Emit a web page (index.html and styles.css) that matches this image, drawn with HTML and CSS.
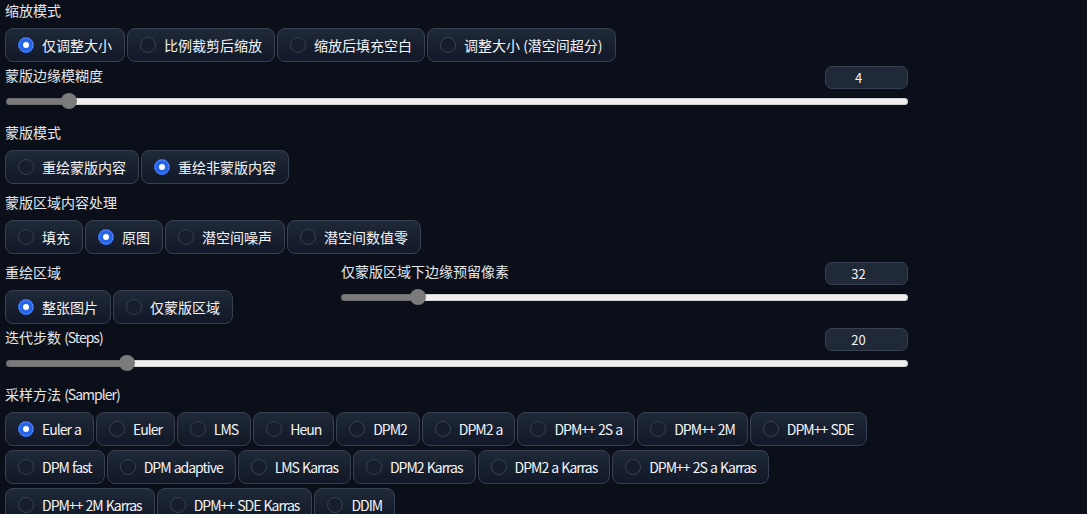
FILE: index.html
```html
<!DOCTYPE html>
<html lang="zh">
<head>
<meta charset="utf-8">
<title>img2img settings</title>
<link rel="stylesheet" href="styles.css">
</head>
<body>
<div class="panel">

  <div class="block radio-block">
    <div class="label">缩放模式</div>
    <div class="options">
      <label class="opt"><span class="radio checked"></span><span>仅调整大小</span></label>
      <label class="opt"><span class="radio"></span><span>比例裁剪后缩放</span></label>
      <label class="opt"><span class="radio"></span><span>缩放后填充空白</span></label>
      <label class="opt"><span class="radio"></span><span>调整大小 (潜空间超分)</span></label>
    </div>
  </div>

  <div class="block slider-block">
    <div class="slider-head">
      <div class="label">蒙版边缘模糊度</div>
      <div class="num">4</div>
    </div>
    <input class="range" type="range" min="0" max="64" value="4" style="--r:0.0625">
  </div>

  <div class="block radio-block">
    <div class="label">蒙版模式</div>
    <div class="options">
      <label class="opt"><span class="radio"></span><span>重绘蒙版内容</span></label>
      <label class="opt"><span class="radio checked"></span><span>重绘非蒙版内容</span></label>
    </div>
  </div>

  <div class="block radio-block">
    <div class="label">蒙版区域内容处理</div>
    <div class="options">
      <label class="opt"><span class="radio"></span><span>填充</span></label>
      <label class="opt"><span class="radio checked"></span><span>原图</span></label>
      <label class="opt"><span class="radio"></span><span>潜空间噪声</span></label>
      <label class="opt"><span class="radio"></span><span>潜空间数值零</span></label>
    </div>
  </div>

  <div class="block two-col">
    <div class="radio-block">
      <div class="label">重绘区域</div>
      <div class="options">
        <label class="opt"><span class="radio checked"></span><span>整张图片</span></label>
        <label class="opt"><span class="radio"></span><span>仅蒙版区域</span></label>
      </div>
    </div>
    <div class="slider-block right-slider">
      <div class="slider-head">
        <div class="label">仅蒙版区域下边缘预留像素</div>
        <div class="num">32</div>
      </div>
      <input class="range" type="range" min="0" max="256" value="32" style="--r:0.125">
    </div>
  </div>

  <div class="block slider-block">
    <div class="slider-head">
      <div class="label">迭代步数 <span class="en">(Steps)</span></div>
      <div class="num">20</div>
    </div>
    <input class="range" type="range" min="1" max="150" value="20" style="--r:0.1275">
  </div>

  <div class="block radio-block">
    <div class="label">采样方法 <span class="en">(Sampler)</span></div>
    <div class="options">
      <label class="opt"><span class="radio checked"></span><span class="en">Euler a</span></label>
      <label class="opt"><span class="radio"></span><span class="en">Euler</span></label>
      <label class="opt"><span class="radio"></span><span class="en">LMS</span></label>
      <label class="opt"><span class="radio"></span><span class="en">Heun</span></label>
      <label class="opt"><span class="radio"></span><span class="en">DPM2</span></label>
      <label class="opt"><span class="radio"></span><span class="en">DPM2 a</span></label>
      <label class="opt"><span class="radio"></span><span class="en">DPM++ 2S a</span></label>
      <label class="opt"><span class="radio"></span><span class="en">DPM++ 2M</span></label>
      <label class="opt"><span class="radio"></span><span class="en">DPM++ SDE</span></label>
      <label class="opt"><span class="radio"></span><span class="en">DPM fast</span></label>
      <label class="opt"><span class="radio"></span><span class="en">DPM adaptive</span></label>
      <label class="opt"><span class="radio"></span><span class="en">LMS Karras</span></label>
      <label class="opt"><span class="radio"></span><span class="en">DPM2 Karras</span></label>
      <label class="opt"><span class="radio"></span><span class="en">DPM2 a Karras</span></label>
      <label class="opt"><span class="radio"></span><span class="en">DPM++ 2S a Karras</span></label>
      <label class="opt"><span class="radio"></span><span class="en">DPM++ 2M Karras</span></label>
      <label class="opt"><span class="radio"></span><span class="en">DPM++ SDE Karras</span></label>
      <label class="opt"><span class="radio"></span><span class="en">DDIM</span></label>
    </div>
  </div>

</div>
</body>
</html>
```

FILE: styles.css
```css
html, body {
  margin: 0;
  padding: 0;
  background: #0b0f19;
  overflow: hidden;
}

body {
  font-family: "Noto Sans CJK SC", "Source Sans Pro", "Noto Sans", sans-serif;
  font-size: 14px;
  color: #e5e7eb;
}

.panel {
  width: 903px;
  margin: -4px 0 0 5px;
  display: flex;
  flex-direction: column;
  gap: 4px;
}

.label {
  line-height: 20px;
  color: #e5e7eb;
  white-space: nowrap;
}

.en {
  letter-spacing: -1px;
  word-spacing: 1px;
}

.radio-block > .label {
  padding-top: 4px;
  margin-bottom: 8px;
}

.options {
  display: flex;
  flex-wrap: wrap;
  gap: 4px 2px;
}

.opt {
  display: flex;
  align-items: center;
  gap: 8px;
  padding: 6px 12px;
  line-height: 20px;
  border: 1px solid #374151;
  border-radius: 8px;
  background: linear-gradient(to top, #111827, #1f2937);
  color: #f3f4f6;
  white-space: nowrap;
}

.radio {
  width: 16px;
  height: 16px;
  box-sizing: border-box;
  border-radius: 50%;
  border: 1px solid #374151;
  background: #161d2b;
  flex: none;
}

.radio.checked {
  border-color: #2563eb;
  background: #ffffff;
  box-shadow: inset 0 0 0 4px #2563eb;
}

.slider-block {
  padding-bottom: 5px;
}

.slider-head {
  display: flex;
  justify-content: space-between;
  align-items: flex-start;
}

.slider-head .label {
  margin-top: -1px;
}

.num {
  width: 83px;
  height: 23px;
  box-sizing: border-box;
  border: 1px solid #374151;
  border-radius: 7px;
  background: #1f2937;
  color: #f3f4f6;
  font-size: 13px;
  line-height: 21px;
  text-align: center;
  padding-right: 16px;
}

.range {
  -webkit-appearance: none;
  appearance: none;
  display: block;
  width: 100%;
  height: 16px;
  margin: 4px 0 0 0;
  padding: 0;
  background: transparent;
}

.slider-block > .range {
  width: calc(100% - 1px);
  margin-left: 1px;
}

.range::-webkit-slider-runnable-track {
  height: 7px;
  border-radius: 4px;
  background: linear-gradient(to right,
    #7b7b7b calc(8px + var(--r) * (100% - 16px)),
    #efefef calc(8px + var(--r) * (100% - 16px)));
  box-shadow: inset 0 0 0 1px rgba(0, 0, 0, 0.12);
}

.range::-webkit-slider-thumb {
  -webkit-appearance: none;
  appearance: none;
  width: 16px;
  height: 16px;
  margin-top: -4.5px;
  border-radius: 50%;
  background: #7b7b7b;
  border: none;
}

.two-col {
  display: grid;
  grid-template-columns: 320px 1fr;
  column-gap: 16px;
}

.right-slider {
  margin-top: 4px;
}

.right-slider > .range {
  width: 100%;
  margin-left: 0;
}
```
